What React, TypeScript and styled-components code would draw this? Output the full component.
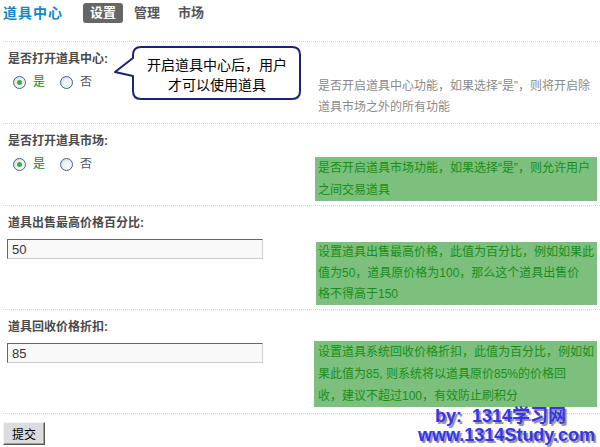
import React from "react";
import styled, { createGlobalStyle } from "styled-components";

const GlobalStyle = createGlobalStyle`
  html, body { margin: 0; padding: 0; background: #fff; }
  body {
    font-family: "Liberation Sans", "Noto Sans CJK SC", sans-serif;
    font-size: 12px;
    color: #333;
  }
`;

const Page = styled.div`
  position: relative;
  width: 600px;
  height: 447px;
  overflow: hidden;
`;

const Header = styled.div`
  display: flex;
  align-items: flex-start;
  height: 41px;
  padding: 3px 0 0 3px;
  box-sizing: border-box;
`;

const Title = styled.h1`
  margin: 0 20px 0 0;
  width: 60px;
  font-size: 14px;
  line-height: 20px;
  font-weight: bold;
  letter-spacing: 1px;
  color: #1389c4;
  white-space: nowrap;
`;

const Tabs = styled.div`
  display: flex;
  gap: 4px;
`;

const Tab = styled.span<{ $active?: boolean }>`
  display: inline-block;
  height: 20px;
  line-height: 20px;
  padding: 0 7px;
  border-radius: 3px;
  font-size: 13px;
  font-weight: bold;
  color: ${(p) => (p.$active ? "#fff" : "#555")};
  background: ${(p) => (p.$active ? "#666" : "transparent")};
`;

const Row = styled.div<{ $h: number }>`
  display: grid;
  grid-template-columns: 311px 1fr;
  height: ${(p) => p.$h}px;
  margin-left: 3px;
  border-top: 1px dotted #d4d4d4;
  box-sizing: border-box;
`;

const Left = styled.div`
  padding: 9px 0 0 5px;
`;

const Label = styled.div`
  font-weight: bold;
  font-size: 12px;
  line-height: 16px;
  color: #4a4a4a;
`;

const RadioGroup = styled.div`
  display: flex;
  align-items: center;
  height: 16px;
  margin-top: 7px;
  padding-left: 5px;
`;

const RadioOption = styled.label`
  display: flex;
  align-items: center;
  gap: 7px;
  margin-right: 15px;
`;

const RadioDot = styled.span<{ $checked?: boolean }>`
  position: relative;
  width: 13px;
  height: 13px;
  border-radius: 50%;
  border: 1px solid #3a6790;
  box-sizing: border-box;
  background: radial-gradient(circle at 65% 65%, #ffffff 0%, #f2f2f2 40%, #cfd3d8 100%);
  &::after {
    content: "";
    position: absolute;
    left: 3px;
    top: 3px;
    width: 5px;
    height: 5px;
    border-radius: 50%;
    background: ${(p) => (p.$checked ? "#33b233" : "transparent")};
  }
`;

const OptionText = styled.span<{ $checked?: boolean }>`
  font-size: 12px;
  line-height: 16px;
  color: ${(p) => (p.$checked ? "#118811" : "#555")};
`;

const TextInput = styled.input`
  display: block;
  width: 256px;
  height: 20px;
  margin: 8px 0 0 -1px;
  padding: 0 4px;
  box-sizing: border-box;
  border: 1px solid;
  border-color: #666 #ccc #ccc #666;
  background: #f9f9f9;
  font-family: "Liberation Sans", sans-serif;
  font-size: 13px;
  color: #333;
  outline: none;
`;

const Right = styled.div`
  min-width: 0;
`;

const PlainHelp = styled.div<{ $top: number }>`
  margin: ${(p) => p.$top}px 0 0 4px;
  line-height: 21px;
  color: #8a8a8a;
  white-space: nowrap;
`;

const HelpBox = styled.div<{ $top: number; $x: number; $lh: number }>`
  margin: ${(p) => p.$top}px 3px 0 ${(p) => p.$x}px;
  padding: 0 0 0 ${(p) => 4 - p.$x}px;
  background: #7dbf7d;
  line-height: ${(p) => p.$lh}px;
  color: #168f16;
  white-space: nowrap;
  overflow: hidden;
`;

const Footer = styled.div`
  margin-left: 3px;
  border-top: 1px dotted #d4d4d4;
  padding-top: 8px;
`;

const SubmitButton = styled.button`
  display: block;
  width: 42px;
  height: 23px;
  padding: 0;
  box-sizing: border-box;
  border: 1px solid;
  border-color: #f4f4f4 #555 #555 #f4f4f4;
  box-shadow: inset -1px -1px 0 #a0a0a0;
  background: #dcdcdc;
  font-family: "Noto Sans CJK SC", sans-serif;
  font-size: 12px;
  color: #000;
`;

const Bubble = styled.div`
  position: absolute;
  left: 114px;
  top: 46px;
  width: 188px;
  height: 55px;
`;

const BubbleShape = styled.svg`
  position: absolute;
  inset: 0;
`;

const BubbleText = styled.div`
  position: absolute;
  left: 20px;
  top: 8px;
  width: 166px;
  text-align: center;
  font-family: "Noto Sans CJK SC", sans-serif;
  font-size: 14px;
  line-height: 20px;
  color: #000;
`;

const Watermark = styled.div`
  position: absolute;
  left: 418px;
  top: 407px;
  font-family: "Liberation Sans", "Noto Sans CJK SC", sans-serif;
  font-weight: bold;
  font-size: 18px;
  line-height: 19px;
  color: #3434f0;
  text-shadow: 2px 2px 1px #8c8c8c;
  white-space: nowrap;
`;

const WatermarkLine = styled.div<{ $indent: number }>`
  padding-left: ${(p) => p.$indent}px;
`;

const Radios: React.FC = () => (
  <RadioGroup>
    <RadioOption>
      <RadioDot $checked />
      <OptionText $checked>是</OptionText>
    </RadioOption>
    <RadioOption>
      <RadioDot />
      <OptionText>否</OptionText>
    </RadioOption>
  </RadioGroup>
);

export default function App() {
  return (
    <Page>
      <GlobalStyle />
      <Header>
        <Title>道具中心</Title>
        <Tabs>
          <Tab $active>设置</Tab>
          <Tab>管理</Tab>
          <Tab>市场</Tab>
        </Tabs>
      </Header>

      <Row $h={82}>
        <Left>
          <Label>是否打开道具中心:</Label>
          <Radios />
        </Left>
        <Right>
          <PlainHelp $top={34}>
            是否开启道具中心功能，如果选择“是”，则将开启除
            <br />
            道具市场之外的所有功能
          </PlainHelp>
        </Right>
      </Row>

      <Row $h={82}>
        <Left>
          <Label>是否打开道具市场:</Label>
          <Radios />
        </Left>
        <Right>
          <HelpBox $top={33} $x={1} $lh={22}>
            是否开启道具市场功能，如果选择“是”，则允许用户
            <br />
            之间交易道具
          </HelpBox>
        </Right>
      </Row>

      <Row $h={104}>
        <Left>
          <Label>道具出售最高价格百分比:</Label>
          <TextInput defaultValue="50" />
        </Left>
        <Right>
          <HelpBox $top={36} $x={2} $lh={21}>
            设置道具出售最高价格，此值为百分比，例如如果此
            <br />
            值为50，道具原价格为100，那么这个道具出售价
            <br />
            格不得高于150
          </HelpBox>
        </Right>
      </Row>

      <Row $h={104}>
        <Left>
          <Label>道具回收价格折扣:</Label>
          <TextInput defaultValue="85" />
        </Left>
        <Right>
          <HelpBox $top={31} $x={0} $lh={22}>
            设置道具系统回收价格折扣，此值为百分比，例如如
            <br />
            果此值为85, 则系统将以道具原价85%的价格回
            <br />
            收，建议不超过100，有效防止刷积分
          </HelpBox>
        </Right>
      </Row>

      <Footer>
        <SubmitButton type="button">提交</SubmitButton>
      </Footer>

      <Bubble>
        <BubbleShape width="188" height="55" viewBox="0 0 188 55">
          <path
            d="M 27 1 H 178 Q 186 1 186 9 V 45 Q 186 53 178 53 H 27 Q 19 53 19 45 V 30 L 1 26 L 19 12 V 9 Q 19 1 27 1 Z"
            fill="#fff"
            stroke="#1b2578"
            strokeWidth="2"
            strokeLinejoin="round"
          />
        </BubbleShape>
        <BubbleText>
          开启道具中心后，用户
          <br />
          才可以使用道具
        </BubbleText>
      </Bubble>

      <Watermark>
        <WatermarkLine $indent={17}>by:&nbsp; 1314学习网</WatermarkLine>
        <WatermarkLine $indent={0}>www.1314Study.com</WatermarkLine>
      </Watermark>
    </Page>
  );
}
